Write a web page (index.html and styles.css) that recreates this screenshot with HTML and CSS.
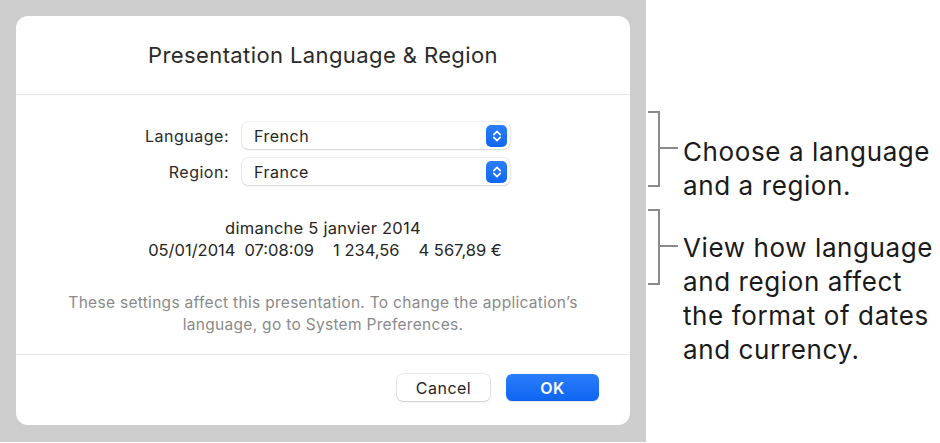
FILE: index.html
```html
<!DOCTYPE html>
<html lang="en">
<head>
<meta charset="UTF-8" />
<title>Presentation Language &amp; Region</title>
<link rel="stylesheet" href="styles.css">
</head>
<body>
    <div class="page">
        <div class="backdrop">
            <div class="dialog">
                <header class="dialog-head">
                    <h1>Presentation Language &amp; Region</h1>
                </header>

                <section class="dialog-body">
                    <div class="form-grid">
                        <label class="field-label" for="popup-language">Language:</label>
                        <div class="popup" id="popup-language">
                            <span>French</span>
                            <span class="stepper">
                                <svg width="10" height="14" viewBox="0 0 10 14"><path d="M1.8 5.6 L5 2.4 L8.2 5.6 M1.8 8.4 L5 11.6 L8.2 8.4" fill="none" stroke="#fff" stroke-width="1.7" stroke-linecap="round" stroke-linejoin="round"/></svg>
                            </span>
                        </div>
                        <label class="field-label" for="popup-region">Region:</label>
                        <div class="popup" id="popup-region">
                            <span>France</span>
                            <span class="stepper">
                                <svg width="10" height="14" viewBox="0 0 10 14"><path d="M1.8 5.6 L5 2.4 L8.2 5.6 M1.8 8.4 L5 11.6 L8.2 8.4" fill="none" stroke="#fff" stroke-width="1.7" stroke-linecap="round" stroke-linejoin="round"/></svg>
                            </span>
                        </div>
                    </div>

                    <div class="sample">
                        <p>dimanche 5 janvier 2014</p>
                        <p class="sample-row">
                            <span>05/01/2014</span>
                            <span class="gap-s">07:08:09</span>
                            <span class="gap-l">1&nbsp;234,56</span>
                            <span class="gap-l">4&nbsp;567,89&nbsp;€</span>
                        </p>
                    </div>

                    <p class="note">These settings affect this presentation. To change the application’s<br />language, go to System Preferences.</p>
                </section>

                <footer class="dialog-foot">
                    <button class="btn">Cancel</button>
                    <button class="btn btn-primary">OK</button>
                </footer>
            </div>
        </div>

        <aside class="callouts">
            <div class="callout callout-first">
                <span class="bracket"></span>
                <span class="tick"></span>
                <p>Choose a language<br />and a region.</p>
            </div>
            <div class="callout callout-second">
                <span class="bracket"></span>
                <span class="tick"></span>
                <p>View how language<br />and region affect<br />the format of dates<br />and currency.</p>
            </div>
        </aside>
    </div>
</body>
</html>
```

FILE: styles.css
```css
* {
    margin:0px;
    padding:0px;
    box-sizing:border-box;
}

body {
    font-family:Inter, 'Liberation Sans', Arial, sans-serif;
    color:#262626;
    background-color:#fff;
}

.page {
    display:flex;
    width:940px;
    height:443px;
}

.backdrop {
    width:646px;
    height:442px;
    padding:16px 16px 17px 16px;
    background-color:#cdcdcd;
}

.dialog {
    display:flex;
    flex-direction:column;
    height:100%;
    border-radius:12px;
    background-color:#fff;
}

.dialog-head {
    height:79px;
    padding-top:25px;
    border-bottom:1px solid #e6e6e6;
    text-align:center;
}

h1 {
    font-size:22px;
    font-weight:400;
    letter-spacing:0.4px;
    line-height:28px;
    color:#2a2a2a;
}

.dialog-body {
    height:260px;
    padding-top:27px;
    border-bottom:1px solid #e6e6e6;
}

.form-grid {
    display:grid;
    grid-template-columns:213px 268px;
    column-gap:13px;
    row-gap:9px;
    align-items:center;
}

.field-label {
    font-size:16px;
    letter-spacing:0.5px;
    line-height:26px;
    text-align:right;
    color:#2a2a2a;
}

.popup {
    display:flex;
    align-items:center;
    justify-content:space-between;
    height:27px;
    padding:0px 3px 0px 12px;
    border-radius:6px;
    font-size:16px;
    letter-spacing:0.5px;
    line-height:26px;
    background-color:#fff;
    box-shadow:0px 0px 0px 0.5px rgba(0, 0, 0, 0.12), 0px 1px 2px rgba(0, 0, 0, 0.12);
}

.stepper {
    display:flex;
    align-items:center;
    justify-content:center;
    width:21px;
    height:22px;
    border-radius:5px;
    background:linear-gradient(#2b7ffb, #1066f0);
}

.sample {
    margin-top:32px;
    font-size:16.5px;
    letter-spacing:0.25px;
    line-height:22px;
    text-align:center;
    color:#262626;
}

.sample-row {
    display:flex;
    justify-content:center;
    padding-left:4px;
    letter-spacing:0px;
}

.gap-s {
    margin-left:9px;
}

.gap-l {
    margin-left:19px;
}

.note {
    margin-top:31px;
    font-size:15.5px;
    letter-spacing:0.3px;
    line-height:22px;
    text-align:center;
    color:#8a8a8a;
}

.dialog-foot {
    display:flex;
    justify-content:flex-end;
    gap:16px;
    padding:19px 31px 0px 0px;
}

.btn {
    width:93px;
    height:27px;
    border:none;
    border-radius:6px;
    font-family:inherit;
    font-size:16px;
    letter-spacing:0.5px;
    color:#262626;
    background-color:#fff;
    box-shadow:0px 0px 0px 0.5px rgba(0, 0, 0, 0.15), 0px 1px 2px rgba(0, 0, 0, 0.15);
}

.btn-primary {
    font-weight:600;
    color:#fff;
    background:linear-gradient(#2a7dfb, #0e65f1);
    box-shadow:0px 1px 1px rgba(0, 0, 0, 0.1);
}

.callouts {
    display:flex;
    flex-direction:column;
    gap:5px;
    padding:111px 0px 0px 2px;
}

.callout {
    display:flex;
    align-items:flex-start;
}

.bracket {
    flex:none;
    width:12px;
    height:76px;
    border:2px solid #8a8a8a;
    border-left:none;
}

.tick {
    flex:none;
    width:18px;
    height:2px;
    margin-top:36px;
    background-color:#8a8a8a;
}

.callout p {
    margin:24px 0px 0px 5px;
    font-size:26px;
    letter-spacing:0.6px;
    line-height:34.3px;
    color:#1a1a1a;
}

.callout-second p {
    margin-top:22px;
}
```
